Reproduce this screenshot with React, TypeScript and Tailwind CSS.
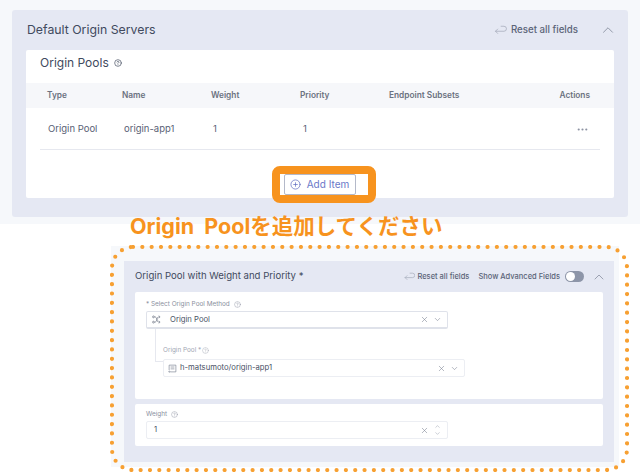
import { ChevronDown, ChevronUp, CircleHelp, CirclePlus, MoreHorizontal, X } from "lucide-react";

const font = "font-['Inter','Noto_Sans_CJK_JP',sans-serif]";

function ReturnIcon({ className }: { className: string }) {
  return (
    <svg viewBox="0 0 20 16" fill="none" stroke="currentColor" strokeWidth="1.2" strokeLinecap="round" strokeLinejoin="round" className={className}>
      <path d="M11 2h4.5a4 4 0 0 1 0 8H2" />
      <path d="M5.5 6.5 2 10l3.5 3.5" />
    </svg>
  );
}

function MethodIcon() {
  return (
    <svg viewBox="0 0 12 12" fill="none" stroke="currentColor" strokeWidth="1" className="w-[9px] h-[9px] mr-[9px] text-[#6f7686]">
      <path d="M3.5 2.5c2 0 2.5 1.5 3 3.5s1 3.500 2.500 3.500M3.500 9.500c2 0 2.500-1.500 3-3.500s1-3.500 2.500-3.500" />
      <circle cx="2" cy="2.500" r="1.200" />
      <circle cx="2" cy="9.500" r="1.200" />
      <path d="M9 1l1.800 1.500L9 4M9 8l1.800 1.500L9 11" />
    </svg>
  );
}

function PoolIcon() {
  return (
    <svg viewBox="0 0 12 12" fill="none" stroke="currentColor" strokeWidth="0.9" className="w-[9px] h-[9px] mr-[3px] ml-[-1px] text-[#7d8494]">
      <path d="M3 10.500H10.500V1.500H1.500V8" />
      <path d="M3.500 4h5M3.500 6.500h5" />
      <circle cx="1.800" cy="10.200" r="0.800" />
    </svg>
  );
}

function ResetFields({ small }: { small?: boolean }) {
  return (
    <div className={small ? "flex items-center gap-[2px] text-[7.5px] font-medium text-[#5b6478]" : "flex items-center gap-[4px] text-[9.7px] font-medium text-[#5b6478]"}>
      <ReturnIcon className={small ? "w-[11px] h-[9px] text-[#a4a9b8]" : "w-[13px] h-[10px] text-[#a4a9b8]"} />
      <span>Reset all fields</span>
    </div>
  );
}

function Help() {
  return <CircleHelp className="w-[7px] h-[7px]" strokeWidth={1.5} />;
}

function Field({ icon, text, stepper, strong }: { icon?: React.ReactNode; text: string; stepper?: boolean; strong?: boolean }) {
  return (
    <div className={strong ? "w-[302px] h-[18px] flex items-center border border-[#dfe2ea] border-b-2 rounded-[2px] bg-white px-[5px]" : "w-[302px] h-[18px] flex items-center border border-[#eceef3] rounded-[2px] bg-white px-[5px]"}>
      {icon}
      <span className={icon ? "text-[7.7px] text-[#4a5266] flex-1" : "text-[7.7px] text-[#4a5266] flex-1 pl-[2px]"}>{text}</span>
      <X className="w-[9px] h-[9px] text-[#7d8494]" strokeWidth={1.5} />
      {stepper ? (
        <div className="flex flex-col ml-[4px]">
          <ChevronUp className="w-[9px] h-[7px] text-[#8d93a3]" strokeWidth={1.5} />
          <ChevronDown className="w-[9px] h-[7px] text-[#8d93a3]" strokeWidth={1.5} />
        </div>
      ) : (
        <ChevronDown className="w-[9px] h-[9px] ml-[4px] text-[#7d8494]" strokeWidth={1.5} />
      )}
    </div>
  );
}

export default function App() {
  return (
    <div className={`${font} w-[640px] h-[473px] bg-white overflow-hidden`}>
      {/* Default origin servers */}
      <section className="h-[224px] bg-[#f6f8fb] pt-[10px] px-[12px]">
        <div className="h-[207px] bg-[#e5e8f3] rounded-[3px] px-[14px]">
          <div className="h-[40px] flex items-center justify-between pl-[1px]">
            <h2 className="text-[12.3px] text-[#414a5e]">Default Origin Servers</h2>
            <div className="flex items-center gap-[21px] mr-[-3px]">
              <ResetFields />
              <ChevronUp className="w-[18px] h-[18px] text-[#8d93a3]" strokeWidth={1.25} />
            </div>
          </div>
          <div className="h-[148px] bg-white rounded-[2px]">
            <div className="h-[33px] flex items-center gap-[5px] px-[14px] pb-[7px]">
              <span className="text-[12px] text-[#414a5e]">Origin Pools</span>
              <CircleHelp className="w-[8px] h-[8px] text-[#414a5e]" strokeWidth={2} />
            </div>
            <div className="h-[25px] bg-[#f6f7fa] flex items-center pl-[21px] pr-[24px] text-[8.3px] font-semibold text-[#6b7280]">
              <span className="w-[75px]">Type</span>
              <span className="w-[89px]">Name</span>
              <span className="w-[89px]">Weight</span>
              <span className="w-[89px]">Priority</span>
              <span className="flex-1">Endpoint Subsets</span>
              <span>Actions</span>
            </div>
            <div className="mx-[14px] h-[42px] pt-[1px] border-b border-[#e6e8ef] flex items-center pl-[8px] pr-[11px] text-[9.500px] text-[#596175]">
              <span className="w-[76px]">Origin Pool</span>
              <span className="w-[89px]">origin-app1</span>
              <span className="w-[90px]">1</span>
              <span className="flex-1">1</span>
              <MoreHorizontal className="w-[13px] h-[13px] text-[#8d93a3]" strokeWidth={2} />
            </div>
            <div className="flex justify-center mt-[16px]">
              <div className="w-[104px] h-[37px] border-[8px] border-[#f7931e] rounded-[8px] bg-white ml-[7px] flex items-stretch pl-[4px]">
                <button className="w-[72px] border border-[#b4b9c9] rounded-[2px] flex items-center justify-center gap-[6px] text-[10px] text-[#6a78c8]">
                  <CirclePlus className="w-[11px] h-[11px] text-[#5a68bd]" strokeWidth={1.5} />
                  Add Item
                </button>
              </div>
            </div>
          </div>
        </div>
      </section>

      <h3 className="text-[21.500px] leading-[24px] font-bold text-[#f7931e] whitespace-pre pl-[130px] mt-[-10px] h-[24px]">
        {"Origin  Poolを追加してください"}
      </h3>

      {/* Origin pool form */}
      <section className="relative ml-[111px] mr-[21px] h-[221px] bg-[#f6f8fb] pt-[15px] pl-[13px] pr-[5px] mt-[8px]">
        <div className="h-[201px] bg-[#e5e8f3] px-[11px]">
          <div className="h-[31px] flex items-center justify-between">
            <h4 className="text-[9.600px] text-[#414a5e]">Origin Pool with Weight and Priority *</h4>
            <div className="flex items-center mr-[-4px]">
              <ResetFields small />
              <span className="text-[7.5px] font-medium text-[#5b6478] ml-[9px]">Show Advanced Fields</span>
              <div className="w-[19px] h-[11px] rounded-full bg-[#8d95a8] ml-[5px] p-[1px]">
                <div className="w-[9px] h-[9px] rounded-full bg-white" />
              </div>
              <ChevronUp className="w-[16px] h-[16px] ml-[7px] text-[#8d93a3]" strokeWidth={1.25} />
            </div>
          </div>
          <div className="h-[107px] bg-white rounded-[2px] pl-[11px] pt-[7px]">
            <div className="flex items-center gap-[4px] h-[11px] mb-[1px] text-[6.400px] text-[#8b91a0]">
              * Select Origin Pool Method
              <Help />
            </div>
            <Field text="Origin Pool" icon={<MethodIcon />} strong />
            {/* nested field with tree connector */}
            <div className="relative pl-[17px] mt-[16px]">
              <div className="absolute left-[9px] top-[-16px] w-[8px] h-[33px] border-l border-b border-[#e6e8ef]" />
              <div className="flex items-center gap-[1px] h-[11px] mb-[3px] text-[6.400px] text-[#a2a7b4]">
                Origin Pool *
                <Help />
              </div>
              <Field text="h-matsumoto/origin-app1" icon={<PoolIcon />} />
            </div>
          </div>
          <div className="h-[42px] mt-[5px] bg-white rounded-[2px] pl-[11px] pt-[5px]">
            <div className="flex items-center gap-[4px] h-[11px] mb-[1px] text-[6.400px] text-[#8b91a0]">
              Weight
              <Help />
            </div>
            <Field text="1" stepper />
          </div>
        </div>
        {/* dotted annotation frame */}
        <svg width="519" height="227" fill="none" className="absolute left-[-1px] top-[-1px]">
          <rect x="2" y="2" width="515" height="223" rx="21" stroke="#f7a032" strokeWidth="4.200" strokeLinecap="round" strokeDasharray="0 9.330" />
        </svg>
      </section>
    </div>
  );
}
